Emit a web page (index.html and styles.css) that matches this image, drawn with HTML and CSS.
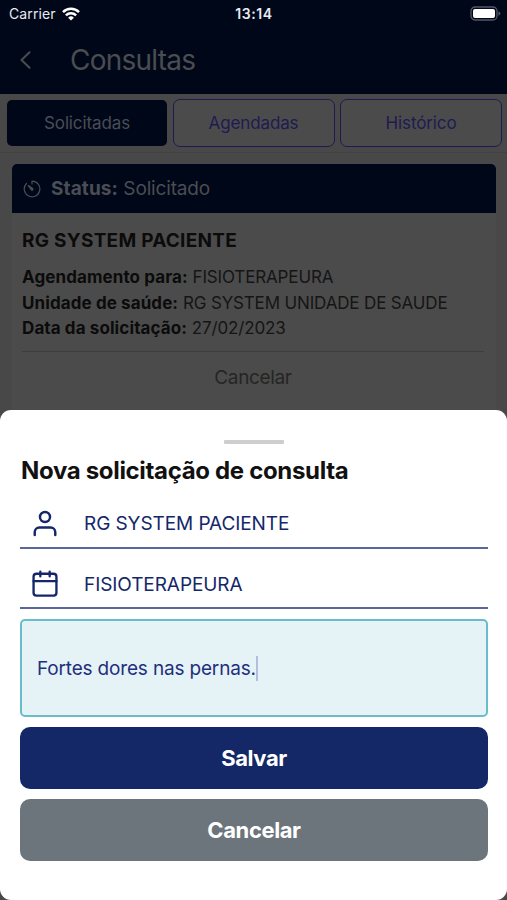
FILE: index.html
```html
<!DOCTYPE html>
<html lang="pt-BR">
  <head>
    <title>Consultas</title>
    <meta charset="utf-8">
    <meta name="viewport" content="width=device-width, initial-scale=1">
    <link rel="stylesheet" href="styles.css">
  </head>

  <body>
    <div class="screen">

      <header>
        <div class="status-bar">
          <div class="carrier">
            <span>Carrier</span>
            <svg width="18" height="14" viewBox="0 0 18 14" fill="none" stroke="#fff" stroke-width="2.5">
              <path d="M1 5.1a11.4 11.4 0 0 1 16 0"/>
              <path d="M3.9 8.3a7.3 7.3 0 0 1 10.2 0"/>
              <path d="M9 13.6L6.1 10.7a4.2 4.2 0 0 1 5.8 0z" fill="#fff" stroke="none"/>
            </svg>
          </div>
          <span class="clock">13:14</span>
          <svg class="battery" width="31" height="15" viewBox="0 0 31 15">
            <rect x="1" y="1" width="26" height="13" rx="4" fill="none" stroke="#54566a" stroke-width="1.3"/>
            <rect x="3" y="3" width="22" height="9" rx="2" fill="#fff"/>
            <path d="M28.4 5.3q2 .8 2 2.2t-2 2.2z" fill="#54566a"/>
          </svg>
        </div>
        <div class="nav">
          <svg width="11" height="18" viewBox="0 0 11 18" fill="none" stroke="#4a4d50" stroke-width="2" stroke-linecap="round" stroke-linejoin="round">
            <path d="M9.5 1.3L1.5 9l8 7.7"/>
          </svg>
          <h1>Consultas</h1>
        </div>
      </header>

      <div class="tabs">
        <button class="tab active">Solicitadas</button>
        <button class="tab">Agendadas</button>
        <button class="tab">Histórico</button>
      </div>

      <div class="card">
        <div class="card-header">
          <svg width="18" height="18" viewBox="0 0 18 18" fill="none" stroke="#4a4d53" stroke-width="1.2" stroke-linecap="round" stroke-linejoin="round">
            <path d="M9 4V1.2a7.8 7.8 0 1 1-5.5 2.3"/>
            <path d="M5.3 5.6l4.5 3a1 1 0 0 1-1.4 1.4z" fill="#4a4d53"/>
          </svg>
          <p><b>Status:</b> <span>Solicitado</span></p>
        </div>
        <div class="card-body">
          <h2>RG SYSTEM PACIENTE</h2>
          <p><b>Agendamento para:</b> <span>FISIOTERAPEURA</span></p>
          <p><b>Unidade de saúde:</b> <span>RG SYSTEM UNIDADE DE SAUDE</span></p>
          <p><b>Data da solicitação:</b> <span>27/02/2023</span></p>
          <div class="card-action">Cancelar</div>
        </div>
      </div>

      <div class="sheet">
        <div class="handle"></div>
        <h3>Nova solicitação de consulta</h3>

        <div class="field">
          <svg width="28" height="28" viewBox="0 0 24 24" fill="none" stroke="#14276a" stroke-width="2.1" stroke-linecap="round" stroke-linejoin="round">
            <path d="M20.8 21.5v-2.5a4 4 0 0 0-4-4H7.2a4 4 0 0 0-4 4v2.5"/>
            <circle cx="12" cy="6" r="4.3"/>
          </svg>
          <span>RG SYSTEM PACIENTE</span>
        </div>

        <div class="field">
          <svg width="28" height="28" viewBox="0 0 24 24" fill="none" stroke="#14276a" stroke-width="2" stroke-linecap="round" stroke-linejoin="round">
            <rect x="2.2" y="3.2" width="19.6" height="18.8" rx="2.5"/>
            <path d="M8 1.4v4M16 1.4v4M2.2 9.6h19.6"/>
          </svg>
          <span>FISIOTERAPEURA</span>
        </div>

        <div class="notes"><span>Fortes dores nas pernas.</span><i class="caret"></i></div>

        <button class="btn save">Salvar</button>
        <button class="btn cancel">Cancelar</button>
      </div>

    </div>
  </body>
</html>
```

FILE: styles.css
```css
* {
  box-sizing: border-box;
  margin: 0;
  padding: 0;
}

body {
  font-family: Inter, Roboto, sans-serif;
  overflow: hidden;
}

button {
  font-family: inherit;
  border: none;
}

svg {
  display: block;
  flex: none;
}

.screen {
  position: relative;
  height: 100vh;
  background: #484848;
  overflow: hidden;
  white-space: nowrap;
}

header {
  height: 94px;
  background: #000719;
}

.status-bar {
  display: grid;
  grid-template-columns: 1fr auto 1fr;
  align-items: center;
  height: 27px;
  padding: 0 6px 0 9px;
  color: #e9eaf2;
  font-size: 14px;
}

.carrier {
  display: flex;
  align-items: center;
  gap: 6px;
  letter-spacing: 0.1px;
}

.clock {
  margin-right: 2px;
  font-weight: 600;
  letter-spacing: 0.6px;
}

.battery {
  justify-self: end;
}

.nav {
  display: flex;
  align-items: center;
  height: 66px;
  padding-left: 20px;
  gap: 39px;
}

.nav h1 {
  font-size: 28px;
  font-weight: 400;
  letter-spacing: -0.75px;
  color: #4a4d50;
}

.tabs {
  display: grid;
  grid-template-columns: 160px 162px 162px;
  column-gap: 5.5px;
  align-items: center;
  height: 59px;
  padding-left: 7px;
  border-bottom: 1px solid #424242;
}

.tab {
  height: 48px;
  font-size: 17px;
  letter-spacing: -0.12px;
  color: #1e1b51;
  background: #4b4b4b;
  border: 1.5px solid #1e1b51;
  border-radius: 7px;
}

.tab.active {
  height: 46px;
  color: #4a4d55;
  background: #000719;
  border: none;
  border-radius: 5px;
}

.card {
  height: 260px;
  margin: 11px 11px 0 12px;
  background: #4b4b4b;
}

.card-header {
  display: flex;
  align-items: center;
  height: 49px;
  padding-left: 11px;
  gap: 10px;
  background: #000719;
  border-radius: 5px 5px 0 0;
  font-size: 19px;
  color: #4a4d53;
}

.card-body {
  padding: 15px 12px 0 10px;
  font-size: 17px;
  line-height: 25.5px;
  color: #151515;
}

.card-body h2 {
  margin-bottom: 11px;
  font-size: 19px;
  line-height: 26px;
  font-weight: 700;
  letter-spacing: 0.27px;
  color: #0b0b0b;
}

.card b {
  font-weight: 700;
  letter-spacing: 0.1px;
}

.card p span {
  letter-spacing: -0.15px;
}

.card-body b {
  color: #0b0b0b;
}

.card-action {
  margin-top: 9px;
  padding-top: 13px;
  border-top: 1px solid #3d3d3d;
  text-align: center;
  font-size: 19px;
  letter-spacing: -0.35px;
  color: #252525;
}

.sheet {
  position: absolute;
  left: 0;
  right: 0;
  top: 410px;
  bottom: 0;
  padding: 30px 19px 0 20px;
  background: #fff;
  border-radius: 11px;
}

.handle {
  width: 60px;
  height: 4px;
  margin: 0 auto;
  background: #cecece;
  border-radius: 1px;
}

.sheet h3 {
  height: 54px;
  padding-left: 1px;
  font-size: 24px;
  line-height: 54px;
  font-weight: 700;
  letter-spacing: -0.33px;
  color: #111;
}

.field {
  display: flex;
  align-items: center;
  height: 51px;
  padding: 2px 0 0 11px;
  gap: 25px;
  border-bottom: 2px solid #5b669a;
  font-size: 19px;
  letter-spacing: -0.08px;
  color: #14276a;
}

.field + .field {
  height: 60px;
  padding-top: 12px;
}

.notes {
  display: flex;
  align-items: center;
  height: 98px;
  margin: 10px 0;
  padding-left: 15px;
  background: #e5f3f6;
  border: 2px solid #6bbccb;
  border-radius: 5px;
  font-size: 19px;
  letter-spacing: -0.17px;
  color: #1f2f7c;
}

.caret {
  width: 2px;
  height: 25px;
  background: #b3bedd;
}

.btn {
  display: block;
  width: 100%;
  height: 62px;
  margin-bottom: 10px;
  border-radius: 10px;
  color: #fff;
  font-size: 22px;
  font-weight: 700;
  letter-spacing: -0.4px;
}

.save {
  background: #142767;
}

.cancel {
  background: #6c757c;
}
```
